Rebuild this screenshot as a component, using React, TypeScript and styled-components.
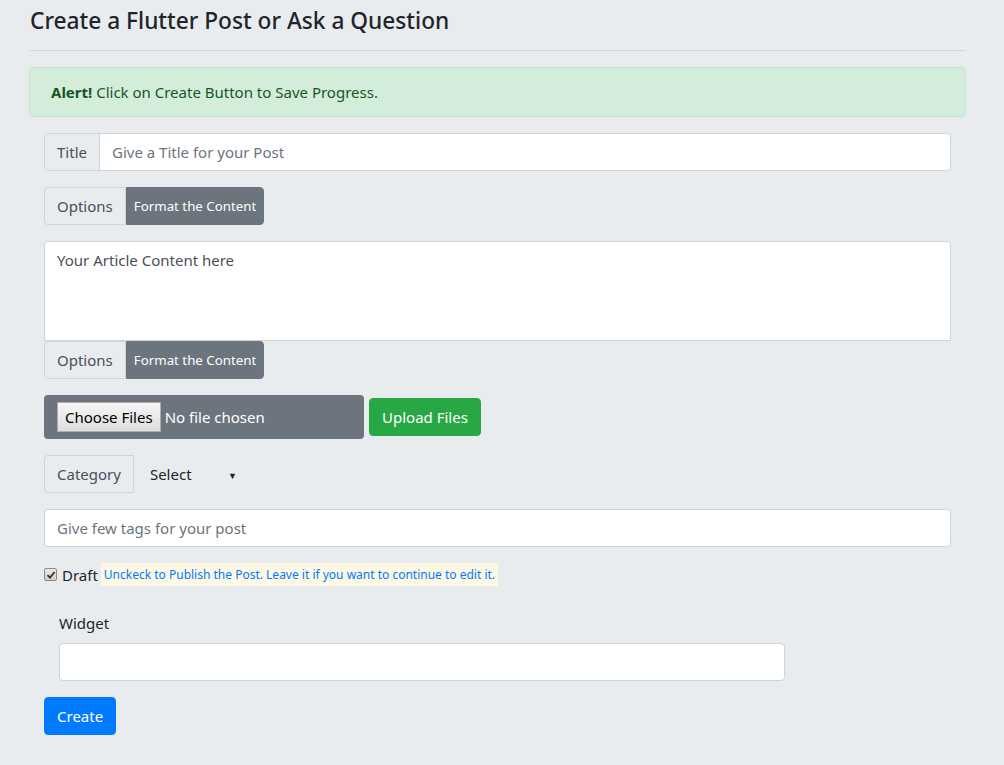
import { createGlobalStyle } from "styled-components";
import styled from "styled-components";

const GlobalStyle = createGlobalStyle`
  body {
    margin: 0;
    background: #e9ecef;
    font-family: "Noto Sans", "Open Sans", sans-serif;
    font-size: 15px;
    line-height: 24px;
    color: #212529;
  }
  * { box-sizing: border-box; }
`;

export default function App() {
  return (
    <>
      <GlobalStyle />
      <Page>
        <Heading>Create a Flutter Post or Ask a Question</Heading>
        <Rule />
        <Alert>
          <strong>Alert!</strong> Click on Create Button to Save Progress.
        </Alert>

        <FormBody>
          <InputGroup>
            <Addon>Title</Addon>
            <TextField placeholder="Give a Title for your Post" />
          </InputGroup>

          <InputGroup>
            <Addon>Options</Addon>
            <FormatButton>Format the Content</FormatButton>
          </InputGroup>

          <ContentArea placeholder="Your Article Content here" />
          <InputGroup>
            <Addon>Options</Addon>
            <FormatButton>Format the Content</FormatButton>
          </InputGroup>

          <UploadRow>
            <FileBox>
              <FileInput type="file" multiple />
            </FileBox>
            <UploadButton>Upload Files</UploadButton>
          </UploadRow>

          <InputGroup>
            <Addon>Category</Addon>
            <SelectWrap>
              <CategorySelect defaultValue="">
                <option value="">Select</option>
                <option>Widgets</option>
                <option>State</option>
              </CategorySelect>
              <Caret>▼</Caret>
            </SelectWrap>
          </InputGroup>

          <TagsField placeholder="Give few tags for your post" />

          <DraftRow>
            <CheckBox>
              <svg width="10" height="10" viewBox="0 0 10 10">
                <path
                  d="M1.5 5.2 L4 7.6 L8.6 2"
                  fill="none"
                  stroke="#333"
                  strokeWidth="1.8"
                />
              </svg>
            </CheckBox>
            <DraftLabel>Draft</DraftLabel>
            <Hint>
              Unckeck to Publish the Post. Leave it if you want to continue to
              edit it.
            </Hint>
          </DraftRow>

          <WidgetBlock>
            <WidgetLabel>Widget</WidgetLabel>
            <WidgetField />
          </WidgetBlock>

          <CreateButton>Create</CreateButton>
        </FormBody>
      </Page>
    </>
  );
}

const Page = styled.div`
  width: 937px;
  margin-left: 29px;
  padding-top: 7px;
  padding-bottom: 30px;
`;

const Heading = styled.h3`
  margin: 0 0 0 1px;
  font-size: 22.7px;
  font-weight: 500;
  line-height: 28px;
  color: #212529;
`;

const Rule = styled.hr`
  margin: 15px 0 16px 1px;
  border: 0;
  border-top: 1px solid #d3d6da;
`;

const Alert = styled.div`
  padding: 12px 21px;
  background: #d4edda;
  border: 1px solid #c3e6cb;
  border-radius: 4px;
  color: #155724;
  strong {
    font-weight: 700;
  }
`;

const FormBody = styled.div`
  padding: 16px 15px 0;
`;

const InputGroup = styled.div`
  display: flex;
  align-items: stretch;
  margin-bottom: 16px;
`;

const Addon = styled.span`
  display: flex;
  align-items: center;
  padding: 6px 12px;
  background: #e9ecef;
  border: 1px solid #ced4da;
  border-radius: 4px 0 0 4px;
  color: #495057;
  white-space: nowrap;
`;

const TextField = styled.input`
  flex: 1;
  height: 38px;
  padding: 6px 12px;
  margin-left: -1px;
  border: 1px solid #ced4da;
  border-radius: 0 4px 4px 0;
  background: #fff;
  font: inherit;
  color: #495057;
  &::placeholder {
    color: #6c757d;
  }
`;

const FormatButton = styled.button`
  height: 38px;
  padding: 4px 7px;
  border: 1px solid #6c757d;
  border-radius: 0 4px 4px 0;
  background: #6c757d;
  color: #fff;
  font-family: inherit;
  font-size: 13.3px;
`;

const ContentArea = styled.textarea`
  display: block;
  width: 100%;
  height: 100px;
  padding: 6px 12px;
  border: 1px solid #ced4da;
  border-radius: 4px 4px 0 0;
  font: inherit;
  resize: none;
  &::placeholder {
    color: #495057;
  }
`;

const UploadRow = styled.div`
  display: flex;
  align-items: center;
  gap: 5px;
  margin-bottom: 16px;
`;

const FileBox = styled.div`
  width: 320px;
  height: 44px;
  padding: 7px 13px;
  background: #6c757d;
  border-radius: 4px;
  display: flex;
  align-items: center;
`;

const FileInput = styled.input`
  font-family: inherit;
  font-size: 15px;
  color: #fff;
  &::file-selector-button {
    font: inherit;
    color: #000;
    height: 30px;
    padding: 0 7px;
    margin-right: 4px;
    background: linear-gradient(#f6f6f6, #dddddd);
    border: 1px solid #adadad;
    border-radius: 0;
  }
`;

const UploadButton = styled.button`
  height: 38px;
  padding: 6px 12px;
  background: #28a745;
  border: 1px solid #28a745;
  border-radius: 4px;
  color: #fff;
  font: inherit;
`;

const SelectWrap = styled.div`
  position: relative;
  display: flex;
  align-items: center;
`;

const CategorySelect = styled.select`
  appearance: none;
  width: 106px;
  height: 38px;
  padding: 6px 16px;
  background: transparent;
  border: 0;
  font: inherit;
  color: #212529;
`;

const Caret = styled.span`
  position: absolute;
  right: 3px;
  top: 9px;
  font-size: 9px;
  pointer-events: none;
  color: #222;
`;

const TagsField = styled.input`
  display: block;
  width: 100%;
  height: 38px;
  padding: 6px 12px;
  border: 1px solid #ced4da;
  border-radius: 4px;
  font: inherit;
  &::placeholder {
    color: #6c757d;
  }
`;

const DraftRow = styled.div`
  display: flex;
  align-items: center;
  margin-top: 16px;
  height: 23px;
`;

const CheckBox = styled.span`
  width: 13px;
  height: 13px;
  display: flex;
  align-items: center;
  justify-content: center;
  border: 1px solid #8a8a8a;
  border-radius: 2px;
  background: linear-gradient(#e8e8e8, #cfcfcf);
  margin-right: 5px;
`;

const DraftLabel = styled.span`
  margin-right: 3px;
`;

const Hint = styled.mark`
  padding: 0 3px;
  background: #fcf8e3;
  color: #007bff;
  font-size: 12px;
  line-height: 23px;
`;

const WidgetBlock = styled.div`
  padding: 25px 15px 0;
`;

const WidgetLabel = styled.label`
  display: block;
  margin-bottom: 8px;
`;

const WidgetField = styled.input`
  display: block;
  width: 726px;
  height: 38px;
  border: 1px solid #ced4da;
  border-radius: 4px;
  background: #fff;
  margin-bottom: 16px;
`;

const CreateButton = styled.button`
  height: 38px;
  padding: 6px 12px;
  background: #007bff;
  border: 1px solid #007bff;
  border-radius: 4px;
  color: #fff;
  font: inherit;
`;
